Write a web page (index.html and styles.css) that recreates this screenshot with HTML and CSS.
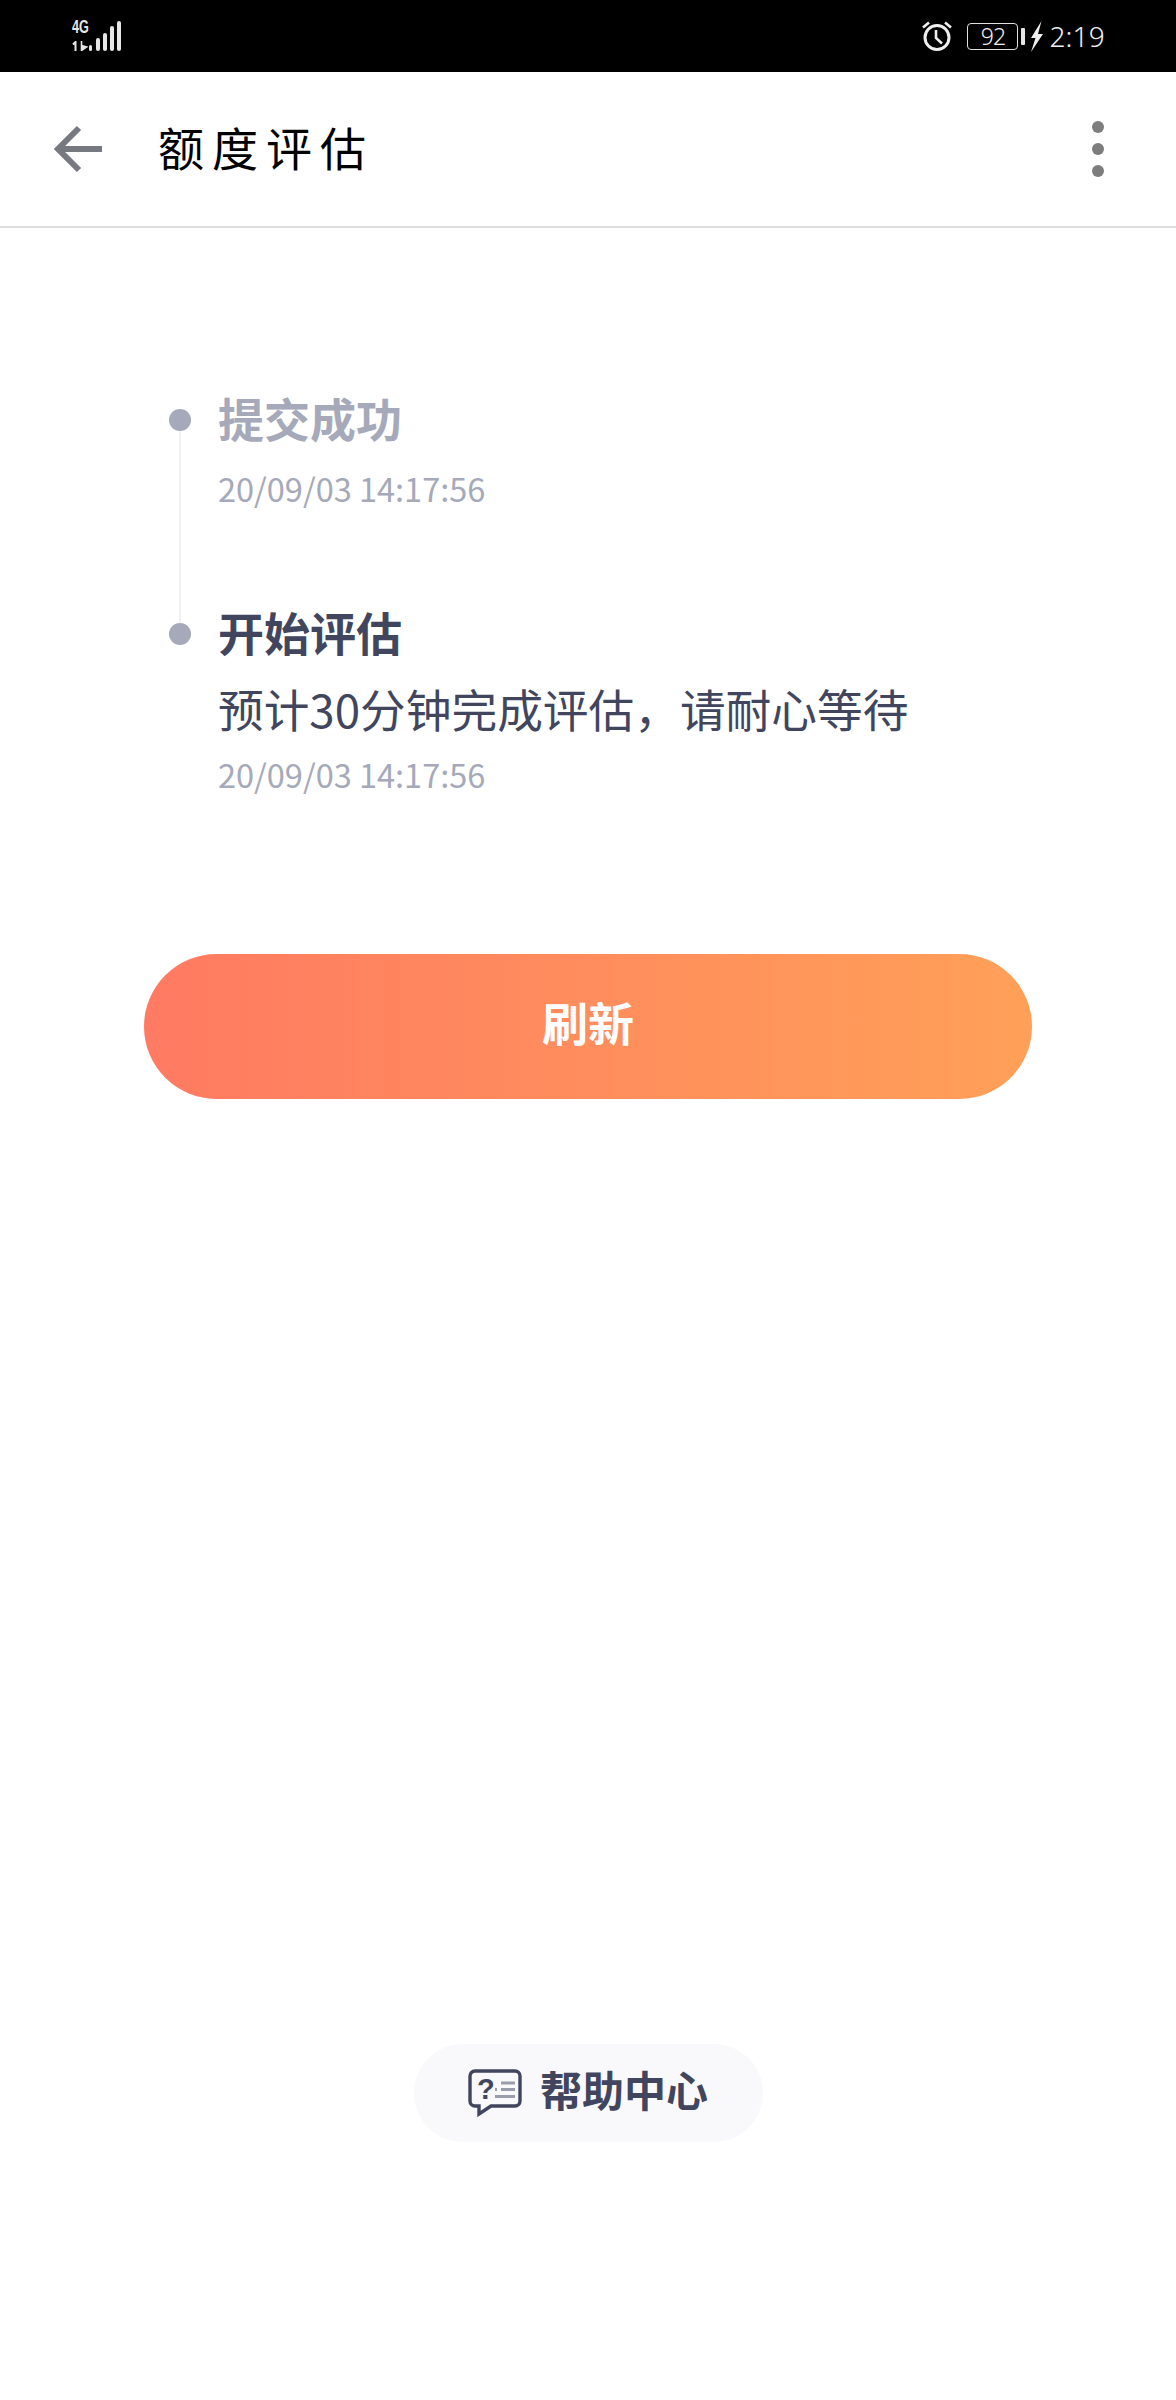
FILE: index.html
```html
<!DOCTYPE html>
<html lang="zh-CN">
  <head>
    <meta charset="UTF-8" />
    <meta name="viewport" content="width=device-width, initial-scale=1.0" />
    <title>额度评估</title>
    <link rel="stylesheet" href="styles.css">
  </head>
  <body>
    <!-- status bar -->
    <div class="status-bar">
      <div class="status-left">
        <div class="net">
          <span class="net-type">4G</span>
          <svg class="net-arrows" width="16" height="10" viewBox="0 0 16 10">
            <path d="M1 3.500 3.500 1V10" fill="none" stroke="#e6e6e6" stroke-width="2" />
            <path d="M9.500 0V10M9.500 9.500l5-3.500-5-1.500z" fill="#e6e6e6" stroke="#e6e6e6" stroke-width="1.600" />
          </svg>
        </div>
        <div class="signal">
          <i class="s1"></i><i class="s2"></i><i class="s3"></i><i class="s4"></i><i class="s5"></i>
        </div>
      </div>
      <div class="status-right">
        <svg class="alarm" width="32" height="32" viewBox="0 0 32 32">
          <circle cx="16" cy="17.500" r="12" fill="none" stroke="#efefef" stroke-width="3" />
          <path d="M15 10v8l6 5.500" fill="none" stroke="#efefef" stroke-width="2.600" />
          <path d="M2 7.500 8 2.500M30 7.500 24 2.500" fill="none" stroke="#efefef" stroke-width="2.600" />
        </svg>
        <div class="battery">
          <span class="battery-body">92</span>
          <span class="battery-cap"></span>
        </div>
        <svg class="bolt" width="14" height="31" viewBox="0 0 14 31">
          <path d="M11.500 0 1 17h4.500L1 31 13 13H8z" fill="#efefef" />
        </svg>
        <span class="clock">2:19</span>
      </div>
    </div>

    <!-- title bar -->
    <div class="top-bar">
      <svg class="back" width="50" height="50" viewBox="0 0 50 50">
        <path d="M26 4 5 25 26 46M5 25H49" fill="none" stroke="#76797f" stroke-width="6" />
      </svg>
      <h1 class="page-title">额度评估</h1>
      <div class="more">
        <i></i><i></i><i></i>
      </div>
    </div>

    <div class="content">
      <ul class="timeline">
        <li class="step step-done">
          <div class="rail"><span class="dot"></span><span class="line"></span></div>
          <div class="step-body">
            <div class="step-title">提交成功</div>
            <div class="step-time">20/09/03 14:17:56</div>
          </div>
        </li>
        <li class="step">
          <div class="rail"><span class="dot"></span></div>
          <div class="step-body">
            <div class="step-title">开始评估</div>
            <div class="step-desc">预计30分钟完成评估，请耐心等待</div>
            <div class="step-time">20/09/03 14:17:56</div>
          </div>
        </li>
      </ul>

      <a class="refresh" href="javascript:;">刷新</a>

      <a class="help" href="javascript:;">
        <svg width="54" height="48" viewBox="0 0 54 48">
          <path d="M7 2h40a5 5 0 0 1 5 5v25a5 5 0 0 1-5 5H23L11 45v-8H7a5 5 0 0 1-5-5V7a5 5 0 0 1 5-5z" fill="none" stroke="#41465e" stroke-width="3.400" />
          <text class="help-mark" x="9" y="30">?</text>
          <path d="M33 14h14M27 20.500h2M33 20.500h14M27 27.500h20" fill="none" stroke="#9a9dac" stroke-width="2.800" />
        </svg>
        <span>帮助中心</span>
      </a>
    </div>
  </body>
</html>
```

FILE: styles.css
```css
* {
  margin: 0;
  padding: 0;
  box-sizing: border-box;
}
html,
body {
  background-color: #fff;
}
body {
  font-family: "Noto Sans CJK SC", "Noto Sans", sans-serif;
  width: 1176px;
  height: 2400px;
  overflow: hidden;
}
ul {
  list-style: none;
}
a {
  text-decoration: none;
}

/* status bar */
.status-bar {
  height: 72px;
  background-color: #000;
  display: flex;
  justify-content: space-between;
  align-items: center;
  padding: 0 71px 0 72px;
}
.status-left {
  display: flex;
  align-items: flex-end;
  height: 30px;
}
.net {
  display: flex;
  flex-direction: column;
  justify-content: space-between;
  width: 17px;
  height: 30px;
}
.net-type {
  font-family: "Liberation Sans", sans-serif;
  font-size: 18px;
  line-height: 13px;
  font-weight: bold;
  color: #e6e6e6;
  white-space: nowrap;
  transform: scaleX(0.7);
  transform-origin: left;
}
.signal {
  display: flex;
  align-items: flex-end;
  gap: 3px;
}
.signal i {
  display: block;
  width: 4px;
  border-radius: 2px;
  background-color: #e6e6e6;
}
.signal .s1 {
  width: 3px;
  height: 6px;
  margin-right: 1px;
}
.signal .s2 {
  height: 13px;
}
.signal .s3 {
  height: 18px;
}
.signal .s4 {
  height: 25px;
}
.signal .s5 {
  height: 30px;
}
.status-right {
  display: flex;
  align-items: center;
}
.alarm {
  margin-right: 14px;
}
.battery {
  display: flex;
  align-items: center;
  gap: 3px;
  margin-right: 5px;
}
.battery-body {
  width: 51px;
  height: 27px;
  border: 1px solid #e0e0e0;
  border-radius: 4px;
  color: #efefef;
  font-family: "Noto Sans", sans-serif;
  font-weight: 300;
  font-size: 23px;
  line-height: 24px;
  letter-spacing: -1px;
  text-align: center;
}
.battery-cap {
  width: 4px;
  height: 17px;
  border-radius: 1px;
  background-color: #e6e6e6;
}
.bolt {
  margin-right: 5px;
}
.clock {
  color: #f0f0f0;
  font-family: "Noto Sans", sans-serif;
  font-weight: 300;
  font-size: 28px;
  line-height: 32px;
  letter-spacing: 0.2px;
}

/* title bar */
.top-bar {
  height: 156px;
  border-bottom: 2px solid #dedede;
  display: flex;
  align-items: center;
  padding: 0 72px 0 53px;
}
.back {
  margin-right: 55px;
}
.page-title {
  flex: 1;
  font-size: 46px;
  line-height: 60px;
  font-weight: 400;
  color: #000;
  letter-spacing: 8px;
  margin-bottom: 6px;
}
.more {
  display: flex;
  flex-direction: column;
  gap: 10px;
}
.more i {
  display: block;
  width: 12px;
  height: 12px;
  border-radius: 50%;
  background-color: #7d7d7d;
}

/* timeline */
.content {
  height: 2172px;
  display: flex;
  flex-direction: column;
  align-items: center;
}
.timeline {
  width: 100%;
  padding: 159px 0 0 169px;
}
.step {
  display: flex;
}
.step-done {
  height: 214px;
}
.rail {
  width: 22px;
  margin-right: 27px;
  padding-top: 22px;
  display: flex;
  flex-direction: column;
  align-items: center;
}
.dot {
  width: 22px;
  height: 22px;
  border-radius: 50%;
  background-color: #a5a9b9;
  flex-shrink: 0;
}
.line {
  width: 2px;
  flex: 1;
  margin-bottom: -22px;
  background-color: #f0f1f4;
}
.step-title {
  font-size: 46px;
  line-height: 60px;
  font-weight: bold;
  color: #41465e;
}
.step-done .step-title {
  color: #a5a9b9;
}
.step-desc {
  font-size: 45.7px;
  line-height: 60px;
  margin-top: 17px;
  color: #41465e;
}
.step-time {
  font-size: 32.5px;
  line-height: 50px;
  margin-top: 16px;
  color: #a5a9b9;
}
.step-desc + .step-time {
  margin-top: 11px;
}

/* buttons */
.refresh {
  width: 888px;
  height: 145px;
  margin-top: 155px;
  border-radius: 73px;
  background: linear-gradient(to right, #ff7a62, #ffa058);
  color: #fff;
  font-size: 46px;
  font-weight: bold;
  line-height: 134px;
  text-align: center;
}
.help {
  width: 349px;
  height: 98px;
  margin-top: 945px;
  border-radius: 49px;
  background-color: #f9f9fb;
  display: flex;
  align-items: center;
  justify-content: center;
  gap: 18px;
  color: #41465e;
  font-size: 42px;
  font-weight: bold;
}
.help span {
  margin-bottom: 10px;
}
.help-mark {
  font-family: "Liberation Sans", sans-serif;
  font-size: 29px;
  font-weight: bold;
  fill: #41465e;
}
```
